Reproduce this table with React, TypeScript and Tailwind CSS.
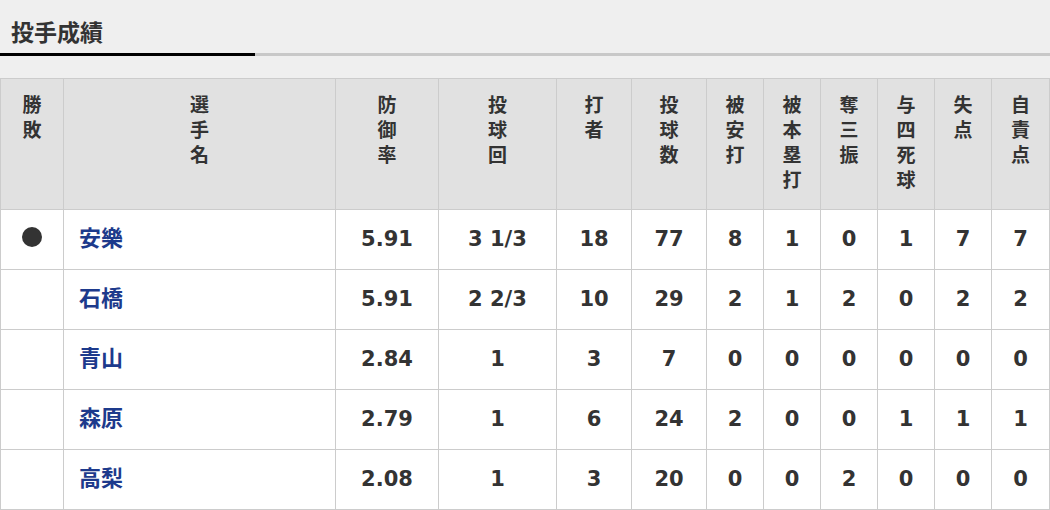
import React from "react";

const headers: { label: string[]; w: number }[] = [
  { label: ["勝", "敗"], w: 63 },
  { label: ["選", "手", "名"], w: 272 },
  { label: ["防", "御", "率"], w: 103 },
  { label: ["投", "球", "回"], w: 118 },
  { label: ["打", "者"], w: 75 },
  { label: ["投", "球", "数"], w: 75 },
  { label: ["被", "安", "打"], w: 57 },
  { label: ["被", "本", "塁", "打"], w: 57 },
  { label: ["奪", "三", "振"], w: 57 },
  { label: ["与", "四", "死", "球"], w: 57 },
  { label: ["失", "点"], w: 57 },
  { label: ["自", "責", "点"], w: 58 },
];

const rows = [
  { win: true, name: "安樂", vals: ["5.91", "3 1/3", "18", "77", "8", "1", "0", "1", "7", "7"] },
  { win: false, name: "石橋", vals: ["5.91", "2 2/3", "10", "29", "2", "1", "2", "0", "2", "2"] },
  { win: false, name: "青山", vals: ["2.84", "1", "3", "7", "0", "0", "0", "0", "0", "0"] },
  { win: false, name: "森原", vals: ["2.79", "1", "6", "24", "2", "0", "0", "1", "1", "1"] },
  { win: false, name: "高梨", vals: ["2.08", "1", "3", "20", "0", "0", "2", "0", "0", "0"] },
];

export default function App() {
  return (
    <div
      className="w-[1050px] h-[510px] bg-[#efefef] overflow-hidden text-[#333]"
      style={{ fontFamily: '"DejaVu Sans", "Noto Sans CJK JP", sans-serif' }}
    >
      <div className="h-[53px] flex items-end pb-[10px] pl-[11px]">
        <h2
          className="text-[23px] font-bold leading-none"
          style={{ fontFamily: '"Noto Sans CJK JP", sans-serif' }}
        >
          投手成績
        </h2>
      </div>
      <div className="flex h-[3px]">
        <div className="w-[255px] bg-black" />
        <div className="flex-1 bg-[#c8c8c8]" />
      </div>
      <table className="mt-[22px] table-fixed border-collapse w-[1050px]">
        <colgroup>
          {headers.map((h, i) => (
            <col key={i} style={{ width: h.w }} />
          ))}
        </colgroup>
        <thead>
          <tr className="h-[131px] bg-[#e1e1e1]">
            {headers.map((h, i) => (
              <th
                key={i}
                className="border border-[#cccccc] align-top pt-[12px] text-center font-bold text-[19px] leading-[25px] text-[#333]"
                style={{ fontFamily: '"Noto Sans CJK JP", sans-serif' }}
              >
                {h.label.map((c, j) => (
                  <div key={j}>{c}</div>
                ))}
              </th>
            ))}
          </tr>
        </thead>
        <tbody>
          {rows.map((r, i) => (
            <tr key={i} className="h-[60px] bg-white">
              <td className="border border-[#cccccc] text-center align-middle">
                {r.win && (
                  <span className="inline-block w-[20px] h-[20px] rounded-full bg-[#333] align-middle relative -top-[3px]" />
                )}
              </td>
              <td
                className="border border-[#cccccc] pl-[15px] pb-[7px] text-left font-bold text-[22px] leading-none text-[#1d3a8c]"
                style={{ fontFamily: '"Noto Sans CJK JP", sans-serif' }}
              >
                {r.name}
              </td>
              {r.vals.map((v, j) => (
                <td
                  key={j}
                  className="border border-[#cccccc] text-center font-bold text-[21px] text-[#333]"
                >
                  {v}
                </td>
              ))}
            </tr>
          ))}
        </tbody>
      </table>
    </div>
  );
}
